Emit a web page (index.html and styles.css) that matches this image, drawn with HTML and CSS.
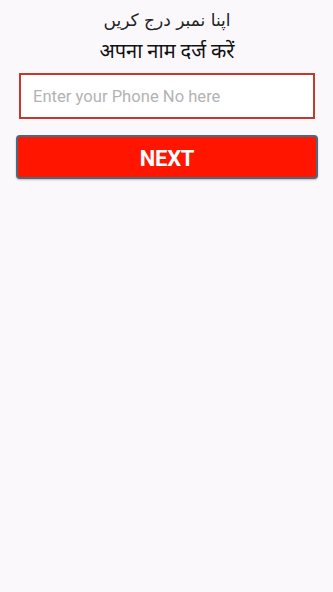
FILE: index.html
```html
<!DOCTYPE html>
<html lang="hi">
<head>
<meta charset="utf-8">
<link rel="stylesheet" href="styles.css">
</head>
<body>
<main class="screen">
  <div class="title-ur" dir="rtl" lang="ur">اپنا نمبر درج کریں</div>
  <div class="title-hi">अपना नाम दर्ज करें</div>
  <input class="phone" type="text" placeholder="Enter your Phone No here">
  <button class="next" type="button">NEXT</button>
</main>
</body>
</html>
```
FILE: styles.css
```css
html, body {
  margin: 0;
  padding: 0;
  background: #fbf8fc;
}
.screen {
  width: 333px;
  height: 592px;
  box-sizing: border-box;
  padding: 8px 15px 0 16px;
  display: flex;
  flex-direction: column;
  align-items: center;
  font-family: Roboto, "Noto Sans", "DejaVu Sans", sans-serif;
}
.title-ur {
  font-family: "DejaVu Sans", "Noto Sans", sans-serif;
  font-size: 17px;
  line-height: 25px;
  color: #222;
}
.title-hi {
  font-size: 20px;
  line-height: 26px;
  color: #111;
  margin-top: 5px;
}
.phone {
  box-sizing: border-box;
  width: 296px;
  height: 46px;
  margin-top: 9px;
  border: 2px solid #c8372d;
  background: #fff;
  padding: 0 12px;
  font-family: Roboto, sans-serif;
  font-size: 16.6px;
  color: #333;
  outline: none;
}
.phone::placeholder {
  color: #b3b3b3;
}
.next {
  box-sizing: border-box;
  width: 302px;
  height: 44px;
  margin-top: 16px;
  background: #ff1500;
  border: 2px solid #4c6a7e;
  border-radius: 4px;
  color: #fff;
  font-family: Roboto, sans-serif;
  font-weight: 700;
  font-size: 22px;
  letter-spacing: -0.3px;
  box-shadow: 0 1px 2px rgba(0,0,0,0.25);
  padding: 3px 0 0;
}
```
